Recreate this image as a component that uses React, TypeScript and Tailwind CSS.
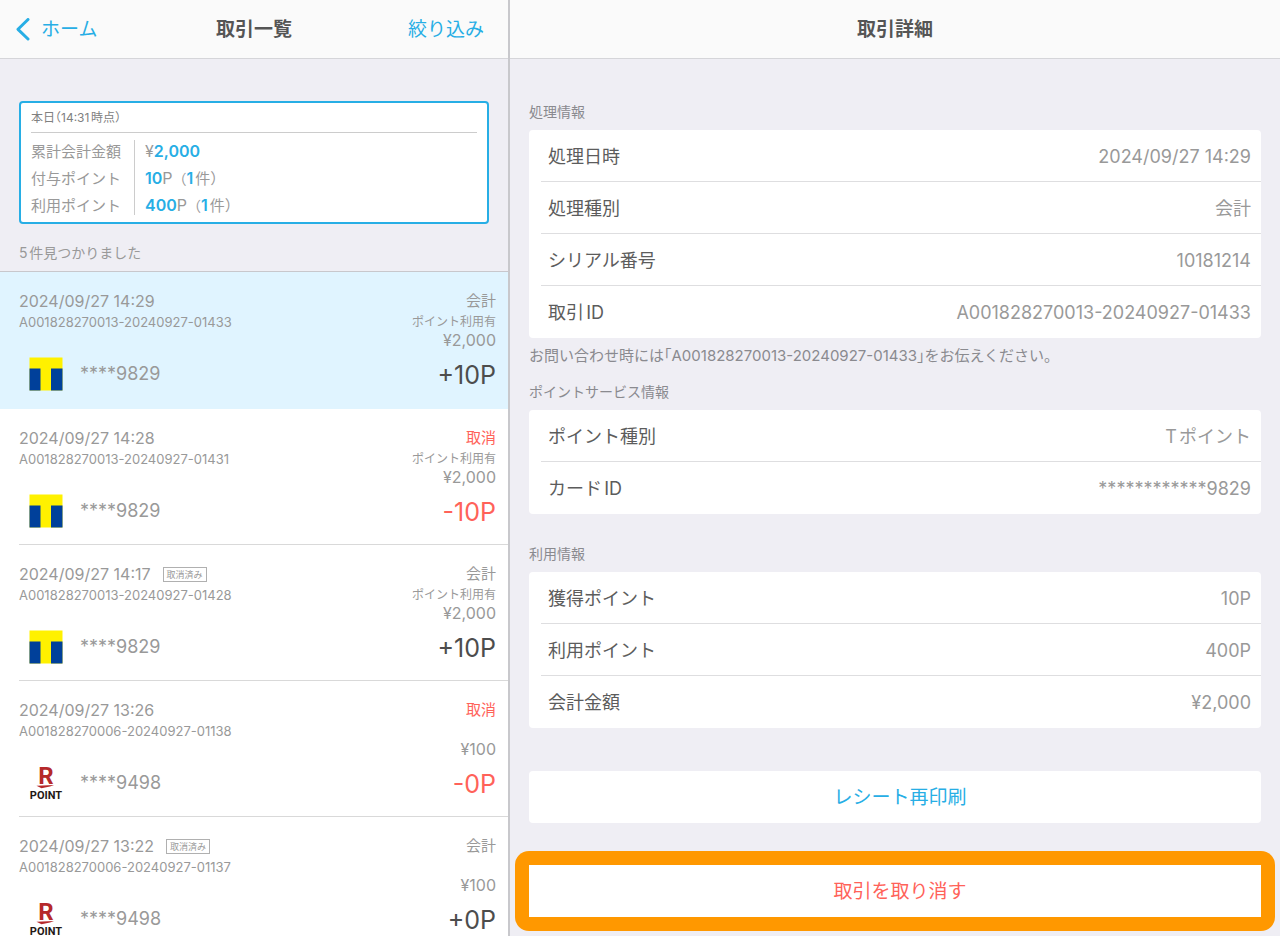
import React from "react";

type Brand = "t" | "r";

interface Transaction {
  date: string;
  id: string;
  kind: "会計" | "取消";
  voided?: boolean;
  usedPoints?: boolean;
  amount: string;
  points: string;
  brand: Brand;
  card: string;
}

const transactions: Transaction[] = [
  { date: "2024/09/27 14:29", id: "A001828270013-20240927-01433", kind: "会計", usedPoints: true, amount: "¥2,000", points: "+10P", brand: "t", card: "****9829" },
  { date: "2024/09/27 14:28", id: "A001828270013-20240927-01431", kind: "取消", usedPoints: true, amount: "¥2,000", points: "-10P", brand: "t", card: "****9829" },
  { date: "2024/09/27 14:17", id: "A001828270013-20240927-01428", kind: "会計", voided: true, usedPoints: true, amount: "¥2,000", points: "+10P", brand: "t", card: "****9829" },
  { date: "2024/09/27 13:26", id: "A001828270006-20240927-01138", kind: "取消", amount: "¥100", points: "-0P", brand: "r", card: "****9498" },
  { date: "2024/09/27 13:22", id: "A001828270006-20240927-01137", kind: "会計", voided: true, amount: "¥100", points: "+0P", brand: "r", card: "****9498" },
];

function TPointLogo() {
  return (
    <svg className="size-[34px]" viewBox="0 0 34 34" role="img" aria-label="Tポイント">
      <rect x="0.5" y="0.5" width="33" height="33" fill="#fff100" />
      <rect x="0.5" y="11.5" width="11" height="22" fill="#00409a" />
      <rect x="22" y="11.5" width="11.5" height="22" fill="#00409a" />
    </svg>
  );
}

function RPointLogo() {
  return (
    <svg className="size-[34px] overflow-visible" viewBox="0 0 34 34" role="img" aria-label="R POINT">
      <text x="17" y="17.5" textAnchor="middle" fontFamily="Roboto, sans-serif" fontWeight="700" fontSize="24" fill="#b5292b">R</text>
      <path d="M7.5 19.8L25 19L21 20.6L12.5 22.3Z" fill="#b5292b" />
      <text x="17" y="32.5" textAnchor="middle" fontFamily="Roboto, sans-serif" fontWeight="700" fontSize="11" fill="#231815">POINT</text>
    </svg>
  );
}

function TransactionRow({ tx, selected }: { tx: Transaction; selected: boolean }) {
  const cancelled = tx.kind === "取消";
  return (
    <li className={selected ? "bg-[#e0f4ff]" : "bg-white pl-[19px]"}>
      <button
        type="button"
        aria-pressed={selected}
        className={
          selected
            ? "flex h-[137px] w-full justify-between pt-[18px] pr-3 pl-[19px] text-left"
            : "flex h-[136px] w-full justify-between border-b border-[#d9d9d9] pt-[18px] pr-3 text-left"
        }
      >
        <span className="flex flex-col text-[#999]">
          <span className="flex h-[22px] items-center gap-3 text-base">
            {tx.date}
            {tx.voided && (
              <span className="flex h-[15px] items-center border border-[#b0b0b0] px-[3px] text-[9px] leading-none">
                取消済み
              </span>
            )}
          </span>
          <span className="text-[13px] leading-5">{tx.id}</span>
          <span className="mt-[25px] flex h-[34px] items-center gap-[17px] pl-2.5 text-lg">
            {tx.brand === "t" ? <TPointLogo /> : <RPointLogo />}
            {tx.card}
          </span>
        </span>
        <span className="flex flex-col items-end text-[#999]">
          <span className={cancelled ? "text-[15px] leading-[22px] text-[#ff6259]" : "text-[15px] leading-[22px]"}>
            {tx.kind}
          </span>
          <span className="h-5 text-xs leading-5">{tx.usedPoints ? "ポイント利用有" : ""}</span>
          <span className="text-base leading-4">{tx.amount}</span>
          <span className={cancelled ? "mt-[11px] text-[25px] leading-8 text-[#ff6259]" : "mt-[11px] text-[25px] leading-8 text-[#4d4d4d]"}>
            {tx.points}
          </span>
        </span>
      </button>
    </li>
  );
}

function DetailCard({ rows }: { rows: [string, string][] }) {
  return (
    <dl className="rounded bg-white pl-3">
      {rows.map(([label, value]) => (
        <div
          key={label}
          className="flex h-[52px] items-center justify-between border-b border-[#dedee0] pt-0.5 pr-2.5 pl-[7px] text-lg last:border-b-0"
        >
          <dt className="text-[#5c5c5c]">{label}</dt>
          <dd className="text-[#999]">{value}</dd>
        </div>
      ))}
    </dl>
  );
}

function Strong({ children }: { children: React.ReactNode }) {
  return <b className="font-semibold text-[#27aee5]">{children}</b>;
}

export default function App() {
  return (
    <div className="grid h-screen grid-cols-[510fr_770fr] overflow-hidden bg-[#efeef4] font-['Inter','Noto_Sans_CJK_JP',sans-serif] [text-autospace:normal]" lang="ja">
      <section className="flex min-h-0 min-w-0 flex-col border-r-2 border-[#c8c8cc]">
        <header className="grid h-[59px] shrink-0 grid-cols-[1fr_auto_1fr] items-center border-b border-[#d5d5d9] bg-[#fafafa] px-4 pt-0.5 text-[19px]">
          <a href="#home" className="flex items-center gap-[11px] text-[#27aee5]">
            <svg className="h-6 w-3.5" viewBox="0 0 14 24" fill="none" stroke="currentColor" strokeWidth="3" strokeLinecap="round" strokeLinejoin="round" aria-hidden="true">
              <path d="M12 1.5L2 11.3L12 21" />
            </svg>
            ホーム
          </a>
          <h1 className="font-bold text-[#555]">取引一覧</h1>
          <button type="button" className="justify-self-end pr-2 text-[#27aee5]">絞り込み</button>
        </header>

        <div className="min-h-0 flex-1 overflow-y-auto [scrollbar-width:none]">
          <div className="mx-[19px] mt-[42px] rounded border-2 border-[#27aee5] bg-white px-2.5 pt-[5px] pb-[3px]">
            <p className="border-b border-[#ccc] pb-1 text-xs leading-5 text-[#808080] [font-feature-settings:'halt']">本日（14:31時点）</p>
            <div className="mt-[5px] flex leading-[27px] text-[#999]">
              <ul className="pr-[13px] text-[15px]">
                <li>累計会計金額</li>
                <li>付与ポイント</li>
                <li>利用ポイント</li>
              </ul>
              <span className="mt-0.5 mr-2.5 mb-1 w-px bg-[#ccc]" />
              <ul className="text-base leading-[27px]">
                <li>¥<Strong>2,000</Strong></li>
                <li><Strong>10</Strong>P<span className="text-sm">（</span><Strong>1</Strong><span className="text-[15px]">件）</span></li>
                <li><Strong>400</Strong>P<span className="text-sm">（</span><Strong>1</Strong><span className="text-[15px]">件）</span></li>
              </ul>
            </div>
          </div>
          <p className="mt-[19px] mb-2 px-[19px] text-sm leading-5 text-[#999]">5件見つかりました</p>
          <ul className="border-t border-[#c8c7cc]">
            {transactions.map((tx, i) => (
              <TransactionRow key={tx.id} tx={tx} selected={i === 0} />
            ))}
          </ul>
        </div>
      </section>

      <section className="flex min-h-0 min-w-0 flex-col">
        <header className="flex h-[59px] shrink-0 items-center justify-center border-b border-[#d5d5d9] bg-[#fafafa] pt-0.5">
          <h2 className="text-[19px] font-bold text-[#555]">取引詳細</h2>
        </header>
        <div className="min-h-0 flex-1 overflow-y-auto px-[19px] pb-1 [scrollbar-width:none]">
          <h3 className="mt-[43px] mb-2 text-sm leading-5 text-[#8a8a8f]">処理情報</h3>
          <DetailCard
            rows={[
              ["処理日時", "2024/09/27 14:29"],
              ["処理種別", "会計"],
              ["シリアル番号", "10181214"],
              ["取引ID", "A001828270013-20240927-01433"],
            ]}
          />
          <p className="mt-2 text-[15px] leading-5 text-[#8a8a8f] [font-feature-settings:'halt']">お問い合わせ時には「A001828270013-20240927-01433」をお伝えください。</p>
          <h3 className="mt-4 mb-2 text-sm leading-5 text-[#8a8a8f]">ポイントサービス情報</h3>
          <DetailCard
            rows={[
              ["ポイント種別", "Tポイント"],
              ["カードID", "************9829"],
            ]}
          />
          <h3 className="mt-[30px] mb-2 text-sm leading-5 text-[#8a8a8f]">利用情報</h3>
          <DetailCard
            rows={[
              ["獲得ポイント", "10P"],
              ["利用ポイント", "400P"],
              ["会計金額", "¥2,000"],
            ]}
          />
          <button type="button" className="mt-[43px] h-[52px] w-full rounded bg-white pt-0.5 pl-2.5 text-[19px] text-[#27aee5]">
            レシート再印刷
          </button>
          <div className="-mx-3.5 mt-7 rounded-[14px] bg-[#ff9800] p-3.5">
            <button type="button" className="block h-[52px] w-full bg-white pt-0.5 pl-2.5 text-[19px] text-[#ff6259]">
              取引を取り消す
            </button>
          </div>
        </div>
      </section>
    </div>
  );
}
